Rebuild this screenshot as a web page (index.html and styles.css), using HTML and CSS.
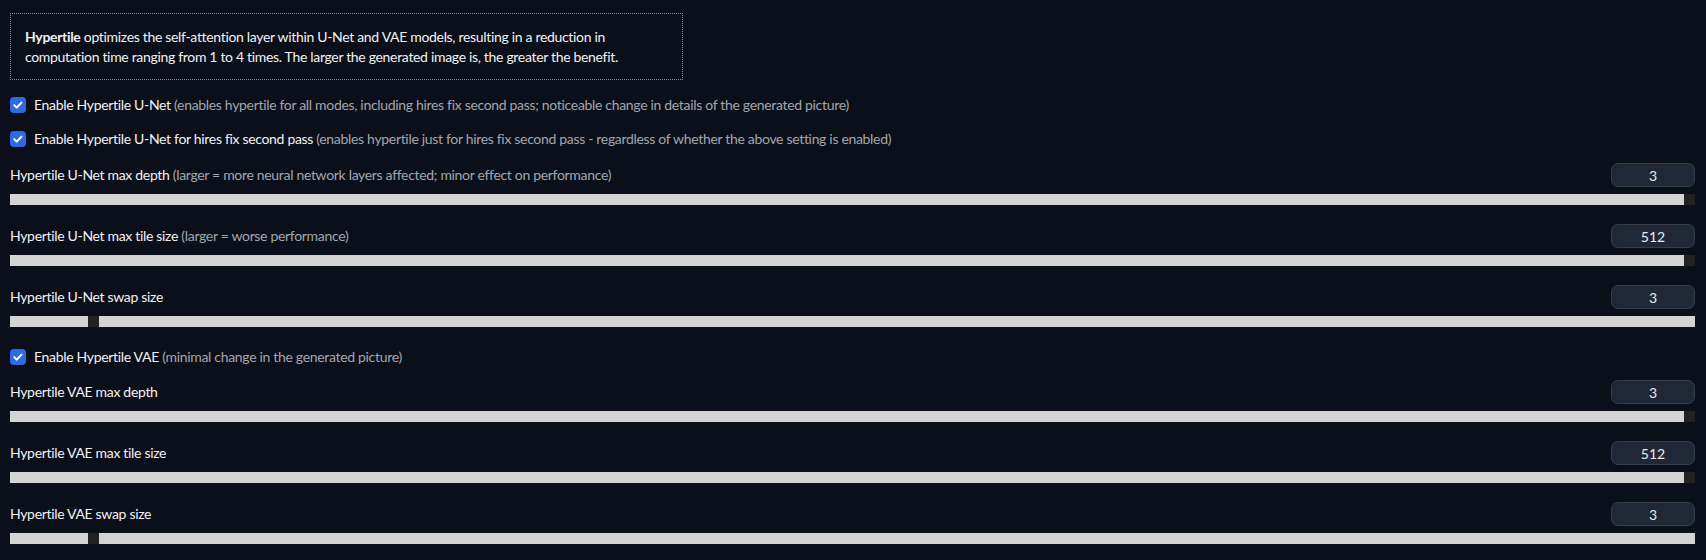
FILE: index.html
```html
<!DOCTYPE html>
<html lang="en">
<head>
  <meta charset="UTF-8">
  <meta name="viewport" content="width=device-width, initial-scale=1.0">
  <title>Hypertile settings</title>
  <link rel="stylesheet" href="styles.css">
</head>
<body>
  <div class="panel">

    <!-- description -->
    <div class="note">
      <b>Hypertile</b> optimizes the self-attention layer within U-Net and VAE models, resulting in a reduction in<br>
      computation time ranging from 1 to 4 times. The larger the generated image is, the greater the benefit.
    </div>

    <label class="check first">
      <span class="box"><svg viewBox="0 0 16 16" width="16" height="16"><path d="M4.3 8.3l2.4 2.3 4.8-5" fill="none" stroke="#fff" stroke-width="2" stroke-linecap="round" stroke-linejoin="round"/></svg></span>
      <span>Enable Hypertile U-Net <span class="info">(enables hypertile for all modes, including hires fix second pass; noticeable change in details of the generated picture)</span></span>
    </label>

    <label class="check">
      <span class="box"><svg viewBox="0 0 16 16" width="16" height="16"><path d="M4.3 8.3l2.4 2.3 4.8-5" fill="none" stroke="#fff" stroke-width="2" stroke-linecap="round" stroke-linejoin="round"/></svg></span>
      <span>Enable Hypertile U-Net for hires fix second pass <span class="info">(enables hypertile just for hires fix second pass - regardless of whether the above setting is enabled)</span></span>
    </label>

    <div class="slider">
      <div class="slider-head">
        <span>Hypertile U-Net max depth <span class="info">(larger = more neural network layers affected; minor effect on performance)</span></span>
        <input class="num" type="number" value="3">
      </div>
      <input class="range" type="range" min="0" max="3" step="1" value="3">
    </div>

    <div class="slider">
      <div class="slider-head">
        <span>Hypertile U-Net max tile size <span class="info">(larger = worse performance)</span></span>
        <input class="num" type="number" value="512">
      </div>
      <input class="range" type="range" min="0" max="512" step="16" value="512">
    </div>

    <div class="slider">
      <div class="slider-head">
        <span>Hypertile U-Net swap size</span>
        <input class="num" type="number" value="3">
      </div>
      <input class="range" type="range" min="0" max="64" step="1" value="3">
    </div>

    <label class="check after-slider">
      <span class="box"><svg viewBox="0 0 16 16" width="16" height="16"><path d="M4.3 8.3l2.4 2.3 4.8-5" fill="none" stroke="#fff" stroke-width="2" stroke-linecap="round" stroke-linejoin="round"/></svg></span>
      <span>Enable Hypertile VAE <span class="info">(minimal change in the generated picture)</span></span>
    </label>

    <div class="slider after-check">
      <div class="slider-head">
        <span>Hypertile VAE max depth</span>
        <input class="num" type="number" value="3">
      </div>
      <input class="range" type="range" min="0" max="3" step="1" value="3">
    </div>

    <div class="slider">
      <div class="slider-head">
        <span>Hypertile VAE max tile size</span>
        <input class="num" type="number" value="512">
      </div>
      <input class="range" type="range" min="0" max="512" step="16" value="512">
    </div>

    <div class="slider">
      <div class="slider-head">
        <span>Hypertile VAE swap size</span>
        <input class="num" type="number" value="3">
      </div>
      <input class="range" type="range" min="0" max="64" step="1" value="3">
    </div>

  </div>
</body>
</html>
```

FILE: styles.css
```css
body {
  margin: 0;
  background: #0b0f19;
  color: #f1f2f5;
  font-family: Lato, "Noto Sans", sans-serif;
  font-size: 14px;
  letter-spacing: -0.32px;
  line-height: 20px;
}

.panel {
  display: flex;
  flex-direction: column;
  padding: 13px 11px 0 10px;
}

.note {
  width: 643px;
  border: 1px dotted #8b9099;
  padding: 13px 14px 12px;
}

.info {
  color: #a3a6ad;
}

/* checkbox rows */
.check {
  display: flex;
  align-items: center;
  gap: 8px;
  height: 20px;
  margin-top: 14px;
}

.check.first {
  margin-top: 15px;
}

.check.after-slider {
  margin-top: 20px;
}

.box {
  width: 16px;
  height: 16px;
  border-radius: 4px;
  background: #2f6ae6;
  display: flex;
}

/* sliders */
.slider {
  display: flex;
  flex-direction: column;
  gap: 7px;
  margin-top: 19px;
}

.check + .slider {
  margin-top: 14px;
}

.slider.after-check {
  margin-top: 13px;
}

.slider-head {
  display: flex;
  justify-content: space-between;
  align-items: center;
  height: 24px;
}

.num {
  box-sizing: border-box;
  width: 84px;
  height: 24px;
  border: 1px solid #363e4c;
  border-radius: 7px;
  background: #202837;
  color: #e8eaee;
  font: inherit;
  letter-spacing: 0;
  text-align: center;
  padding: 0;
  -moz-appearance: textfield;
}

.num::-webkit-inner-spin-button,
.num::-webkit-outer-spin-button {
  -webkit-appearance: none;
  margin: 0;
}

.range {
  -webkit-appearance: none;
  appearance: none;
  width: 100%;
  height: 11px;
  margin: 0;
  background: transparent;
}

.range::-webkit-slider-runnable-track {
  height: 11px;
  background: #d4d4d4;
  border: none;
}

.range::-webkit-slider-thumb {
  -webkit-appearance: none;
  width: 11px;
  height: 11px;
  border: none;
  border-radius: 0;
  background: #222222;
}
```
